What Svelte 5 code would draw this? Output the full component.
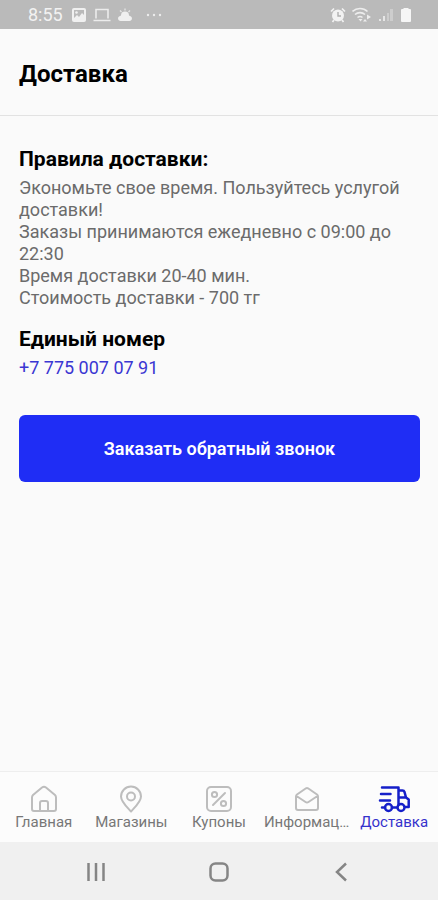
<script>
  const phone = '+7 775 007 07 91';
  const tabs = [
    { id: 'home', label: 'Главная' },
    { id: 'shops', label: 'Магазины' },
    { id: 'coupons', label: 'Купоны' },
    { id: 'info', label: 'Информац…' },
    { id: 'delivery', label: 'Доставка' }
  ];
  let active = $state('delivery');
</script>

<div class="screen">
  <div class="status">
    <span class="clock">8:55</span>
    <svg class="picture" width="16" height="16" viewBox="0 0 16 16" aria-hidden="true">
      <rect x="1" y="1" width="14" height="14" rx="2" fill="#f0f0f0" />
      <path d="M3 3h10v5l-2-2-3 4-2-2-3 3z" fill="#bababa" />
      <circle cx="5.500" cy="5.500" r="1.300" fill="#f0f0f0" />
    </svg>
    <svg class="laptop" width="18" height="16" viewBox="0 0 18 16" aria-hidden="true">
      <path d="M3 11.500v-9h12v9M0.500 13.500h17" fill="none" stroke="#ececec" stroke-width="1.600" />
    </svg>
    <svg class="weather" width="16" height="16" viewBox="0 0 16 16" aria-hidden="true">
      <path d="M3.500 14a2.500 2.500 0 0 1-1.500-4.500L4 8.500a4 4 0 0 1 8 0l2 1a2.500 2.500 0 0 1-1.500 4.500z" fill="#f0f0f0" />
      <path d="M8 1.500v2M3 3.500l1.500 1.500M13 3.500l-1.500 1.500" stroke="#e6e6e6" stroke-width="1.300" />
    </svg>
    <svg class="more" width="18" height="16" viewBox="0 0 18 16" aria-hidden="true">
      <g fill="#ececec"><circle cx="3" cy="8" r="1.200" /><circle cx="9" cy="8" r="1.200" /><circle cx="15" cy="8" r="1.200" /></g>
    </svg>
    <span class="space"></span>
    <svg width="16" height="16" viewBox="0 0 16 16" aria-hidden="true">
      <circle cx="8" cy="8.500" r="6" fill="#f2f2f2" />
      <path d="M1 4.500 4 1.500M15 4.500 12 1.500M4 13l-1.500 2M12 13l1.500 2" stroke="#f2f2f2" stroke-width="1.700" />
      <path d="M8 5v4h3" fill="none" stroke="#b0b0b0" stroke-width="1.400" />
    </svg>
    <svg class="wifi" width="20" height="16" viewBox="0 0 20 16" aria-hidden="true">
      <path d="M0.500 4.500a11 11 0 0 1 15 0M3 7.500a7.500 7.500 0 0 1 10 0M5.500 10.500a4 4 0 0 1 5 0" fill="none" stroke="#ededed" stroke-width="1.600" />
      <path d="m8.500 14.500 2-2.500h-4zM11 14.500l2-2.500 2 2.500zM15 7.500l4 2.500-4 2.500z" fill="#ededed" />
    </svg>
    <svg width="16" height="16" viewBox="0 0 16 16" aria-hidden="true">
      <path d="M1 12h2v2H1zM5 9h2v5H5z" fill="#e6e6e6" />
      <path d="M9 6h2v8H9zM12 2h3v12h-3z" fill="#cdcdcd" />
    </svg>
    <svg class="battery" width="12" height="16" viewBox="0 0 12 16" aria-hidden="true">
      <path d="M3.500 1h5v1H10a1 1 0 0 1 1 1v11a1 1 0 0 1-1 1H2a1 1 0 0 1-1-1V3a1 1 0 0 1 1-1h1.500z" fill="#f6f6f6" />
    </svg>
  </div>

  <header><h1>Доставка</h1></header>

  <main>
    <section>
      <h2>Правила доставки:</h2>
      <p>Экономьте свое время. Пользуйтесь услугой доставки!</p>
      <p>Заказы принимаются ежедневно с 09:00 до 22:30</p>
      <p>Время доставки 20-40 мин.</p>
      <p>Стоимость доставки - 700 тг</p>
    </section>
    <section>
      <h2>Единый номер</h2>
      <a class="phone" href="tel:+77750070791">{phone}</a>
    </section>
    <button class="call" type="button">Заказать обратный звонок</button>
  </main>

  <nav class="tabs">
    {#each tabs as tab (tab.id)}
      <button type="button" class:active={active === tab.id} onclick={() => (active = tab.id)}>
        <svg width="32" height="28" viewBox="0 0 32 28" aria-hidden="true">
          {#if tab.id === 'home'}
            <path d="M4 12.500Q4 11 5 10L14 2.500q2-1.500 4 0L27 10q1 1 1 2.500V24q0 2-2 2H6q-2 0-2-2zM12 26v-8q0-2 2-2h4q2 0 2 2v8" />
          {:else if tab.id === 'shops'}
            <path d="M16 26.500C13 23 6 17 6 11.500a10 10 0 0 1 20 0C26 17 19 23 16 26.500z" />
            <circle cx="16" cy="11.500" r="4" />
          {:else if tab.id === 'coupons'}
            <rect x="4" y="2" width="24" height="24" rx="4" />
            <path d="m10 20 12-12" />
            <circle cx="11.500" cy="9.500" r="2.600" />
            <circle cx="20.500" cy="18.500" r="2.600" />
          {:else if tab.id === 'info'}
            <path d="M5 11.500q0-1 1-2L15 3.300q1-.6 2 0l9 6.200q1 1 1 2V23q0 2-2 2H7q-2 0-2-2zM5.500 11l9 6q1.500 1 3 0l9-6" />
          {:else}
            <g stroke-width="2.500">
              <path d="M4 2.500h16.500V20M20.500 5.500h4q1.500 0 2 1.500l1.500 5.500 2.700 2v7.500H27.500M20.500 12.500H28M3 9h9.500M2 15.500h10M4 22.500h3M14 22.500h5" />
              <circle cx="10.500" cy="22.500" r="3.500" />
              <circle cx="23" cy="22.500" r="3.500" />
            </g>
          {/if}
        </svg>
        <span>{tab.label}</span>
      </button>
    {/each}
  </nav>

  <div class="system">
    <button type="button" aria-label="Недавние">
      <svg width="24" height="24" viewBox="0 0 24 24"><path d="M4.500 3v18M12 3v18M19.500 3v18" /></svg>
    </button>
    <button type="button" aria-label="Домой">
      <svg width="24" height="24" viewBox="0 0 24 24"><rect x="3.500" y="3.500" width="17" height="17" rx="5" /></svg>
    </button>
    <button type="button" aria-label="Назад">
      <svg width="24" height="24" viewBox="0 0 24 24"><path d="m16 3.500-9 8.500 9 8.500" /></svg>
    </button>
  </div>
</div>

<style>
  .screen {
    display: flex;
    flex-direction: column;
    min-height: 100vh;
    background: #fafafa;
    color: #000;
    font-family: Roboto, 'Noto Sans', sans-serif;
  }
  button {
    border: 0;
    padding: 0;
    background: none;
    font-family: inherit;
    cursor: pointer;
  }
  svg { flex: none; }
  .status {
    display: flex;
    align-items: center;
    gap: 6px;
    padding: 0 26px 0 28px;
    background: #bababa;
  }
  .clock {
    margin-right: 2px;
    color: #f2f2f2;
    font-size: 18px;
    line-height: 29px;
  }
  .more { margin-left: 6px; }
  .space { flex: 1; }
  header {
    padding: 30px 19px 26px;
    border-bottom: 1px solid #e2e2e2;
  }
  h1 {
    margin: 0;
    font-size: 24px;
    line-height: 30px;
    font-weight: 700;
  }
  main {
    flex: 1;
    padding: 30px 18px 30px 19px;
  }
  section { margin-bottom: 17px; }
  h2 {
    margin: 0 0 5px;
    font-size: 21px;
    line-height: 26px;
    font-weight: 700;
  }
  p {
    margin: 0;
    color: #6b6b6b;
    font-size: 18px;
    line-height: 22px;
  }
  .phone {
    display: block;
    color: #3a36d2;
    font-size: 18px;
    line-height: 22px;
    text-decoration: none;
  }
  .call {
    display: block;
    width: 100%;
    margin-top: 36px;
    padding: 22px 16px;
    border-radius: 6px;
    background: #1f2df5;
    color: #fff;
    font-size: 18px;
    line-height: 23px;
    font-weight: 600;
  }
  .tabs {
    display: grid;
    grid-template-columns: repeat(5, minmax(0, 1fr));
    padding: 13px 0 10px;
    border-top: 1px solid #eee;
    background: #fcfcfc;
  }
  .tabs button {
    display: flex;
    flex-direction: column;
    align-items: center;
    color: #bdbdbd;
  }
  .tabs svg {
    fill: none;
    stroke: currentColor;
    stroke-width: 2;
    stroke-linecap: round;
    stroke-linejoin: round;
  }
  .tabs span {
    color: #777;
    font-size: 15px;
    line-height: 19px;
    white-space: nowrap;
  }
  .tabs .active { color: #151fc9; }
  .tabs .active span { color: #3432cc; }
  .system {
    display: grid;
    grid-template-columns: repeat(3, 1fr);
    padding: 18px 35px 16px;
    background: #f0f0f0;
  }
  .system button {
    display: flex;
    align-items: center;
    justify-content: center;
  }
  .system svg {
    fill: none;
    stroke: #858585;
    stroke-width: 2.500;
  }
</style>
